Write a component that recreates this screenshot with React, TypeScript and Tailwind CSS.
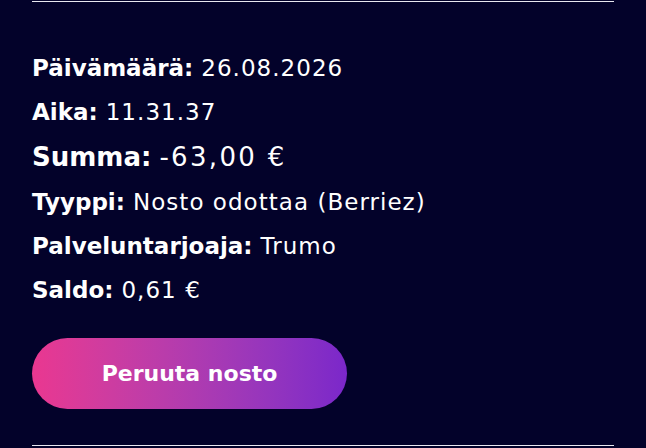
import React from "react";

const rows: { label: string; value: string; big?: boolean }[] = [
  { label: "Päivämäärä:", value: "26.08.2026" },
  { label: "Aika:", value: "11.31.37" },
  { label: "Summa:", value: "-63,00 €", big: true },
  { label: "Tyyppi:", value: "Nosto odottaa (Berriez)" },
  { label: "Palveluntarjoaja:", value: "Trumo" },
  { label: "Saldo:", value: "0,61 €" },
];

export default function App() {
  return (
    <div
      className="w-[646px] h-[448px] bg-[#03022a] text-white overflow-hidden"
      style={{ fontFamily: "'DejaVu Sans', sans-serif" }}
    >
      <div className="mx-8 pt-px">
        <div className="h-px bg-[#e8e8f0]" />
        <div className="flex flex-col pt-[44px]">
          {rows.map((r) => (
            <div
              key={r.label}
              className={
                r.big
                  ? "text-[26px] leading-[46px]"
                  : "text-[23px] leading-[44px]"
              }
            >
              <span className="font-bold mr-2">{r.label}</span>
              <span className={r.big ? "tracking-[0.09em]" : "tracking-[0.045em]"}>
                {r.value}
              </span>
            </div>
          ))}
        </div>
        <button className="mt-[26px] w-[315px] h-[71px] rounded-full bg-gradient-to-r from-[#ea3790] to-[#7b27ca] text-[22px] font-bold text-white">
          Peruuta nosto
        </button>
        <div className="mt-[36px] h-px bg-[#e8e8f0]" />
      </div>
    </div>
  );
}
